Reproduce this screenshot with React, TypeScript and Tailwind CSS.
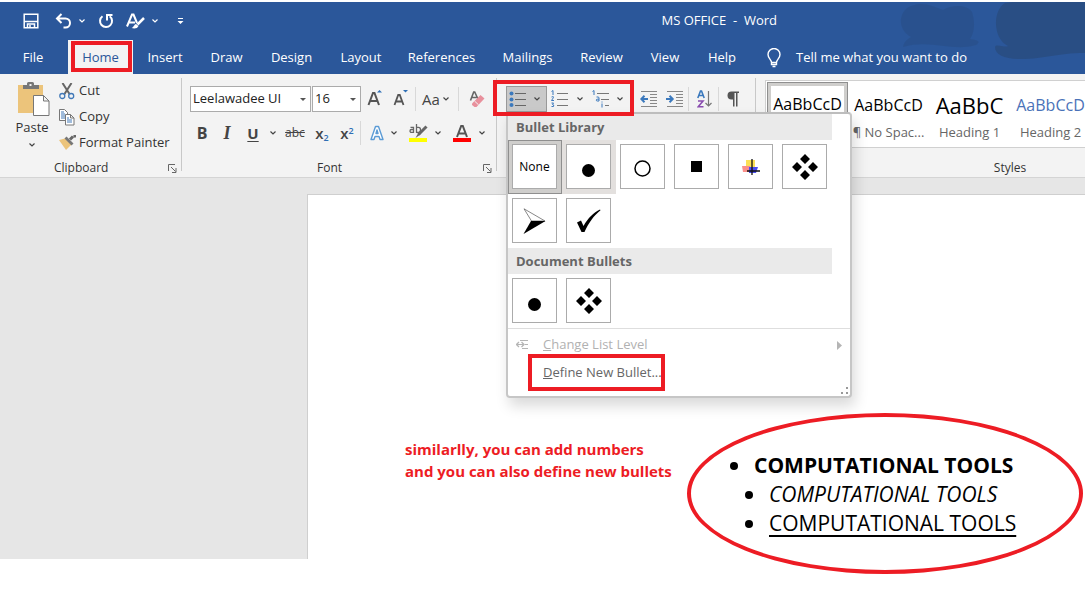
import React from "react";

type Tab = { name: string; width: string };

const TABS: Tab[] = [
  { name: "Insert", width: "w-[64px]" },
  { name: "Draw", width: "w-[59px]" },
  { name: "Design", width: "w-[71px]" },
  { name: "Layout", width: "w-[68px]" },
  { name: "References", width: "w-[93px]" },
  { name: "Mailings", width: "w-[79px]" },
  { name: "Review", width: "w-[69px]" },
  { name: "View", width: "w-[58px]" },
  { name: "Help", width: "w-[56px]" },
];

function Chevron({ className = "text-[#444]" }: { className?: string }) {
  return (
    <svg viewBox="0 0 8 6" className={`h-1.5 w-2 shrink-0 ${className}`} fill="none" stroke="currentColor" strokeWidth="1.2">
      <path d="M1.5 1.5 4 4 6.500 1.5" />
    </svg>
  );
}

function Separator() {
  return <div className="h-6 w-px shrink-0 bg-[#d8d8d8]" />;
}

function GroupDivider() {
  return <div className="mt-1 mb-1.5 w-px shrink-0 bg-[#c8c8c8]" />;
}

function Launcher({ label }: { label: string }) {
  return (
    <button aria-label={label} className="shrink-0">
      <svg viewBox="0 0 9 9" className="size-[9px]" fill="none" stroke="#666">
        <path d="M.5 7V.5H7M3 3l4.500 4.500M8 4v4.500H4" />
      </svg>
    </button>
  );
}

function QuickAccess() {
  return (
    <div className="flex items-center text-white">
      <button aria-label="Save">
        <svg viewBox="0 0 16 16" className="size-4" fill="none" stroke="currentColor" strokeWidth="1.500">
          <path d="M1.200 1.200h13.600v13.600H1.200zM1.500 8.500h13" />
          <path d="M4.500 14.500v-3.500h7v3.500M7 14v-2" />
        </svg>
      </button>
      <button aria-label="Undo" className="ml-4">
        <svg viewBox="0 0 17 16" className="h-4 w-[17px]" fill="none" stroke="currentColor" strokeWidth="2">
          <path d="M6.500 1 2 5.500 6.500 10M2 5.500h8.500a4.500 4.500 0 0 1 0 9H8.500" />
        </svg>
      </button>
      <button aria-label="Undo history" className="ml-1.5"><Chevron className="text-white" /></button>
      <button aria-label="Repeat" className="ml-3">
        <svg viewBox="0 0 16 16" className="size-4" fill="none" stroke="currentColor" strokeWidth="2">
          <path d="M4.500 3.200A6 6 0 1 0 11.700 3.300" />
          <path d="M9 7.500V2h5.500" />
        </svg>
      </button>
      <button aria-label="Text styles" className="ml-3">
        <svg viewBox="0 0 19 17" className="h-[17px] w-[19px]" fill="none" stroke="currentColor">
          <path d="M1 13.500 6 1.500h1.500L11 10M3 9.500h6" strokeWidth="2" />
          <path d="m18 5-6.500 6.500" strokeWidth="2.500" />
          <path d="M5.500 15c2-.3 2.500-3.500 4.500-4l2.500 2c-1 2.500-4 3-7 2z" fill="currentColor" stroke="none" />
        </svg>
      </button>
      <button aria-label="Text style options" className="ml-1.5"><Chevron className="text-white" /></button>
      <button aria-label="Customize quick access" className="ml-[18px]">
        <svg viewBox="0 0 7 7" className="size-[7px]" fill="currentColor">
          <path d="M1 0h5v1H1zM.5 3h6L3.500 6z" />
        </svg>
      </button>
    </div>
  );
}

function Header() {
  return (
    <header className="relative bg-[#2b579a] text-white">
      <svg viewBox="0 0 188 60" className="absolute top-0 right-0 h-[60px] w-[188px]" fill="#294c80" aria-hidden="true">
        <path opacity=".45" d="M14 4C26-1 36 4 46 8c8-5 24-6 29 2 3 9 3 20-2 27 6 1 12 2 6 6-24 7-45-6-73 2 1-6 5-8 8-10C0 28 1 9 14 4z" />
        <path opacity=".85" d="M108 1c16-3 40 0 52-1h28v51c-30 0-38 6-65 6-15 0-25-4-25-12 1-4 10 1 13-1-15-7-16-35-3-43z" />
      </svg>
      <div className="relative flex h-[38px] items-center justify-between pl-[23px]">
        <QuickAccess />
        <h1 className="mr-[308px] text-[13px] whitespace-pre">MS OFFICE  -  Word</h1>
      </div>
      <nav className="relative flex h-[34px] items-stretch text-[13px] [&>button]:pt-px">
        <button className="mr-0.5 w-[66px]">File</button>
        <button className="relative w-[65px] bg-[#f3f3f3] text-[#2b579a]">
          Home
          <span className="absolute top-px right-px bottom-0.5 left-[3px] border-4 border-[#ed1c24]" />
        </button>
        {TABS.map((t) => (
          <button key={t.name} className={t.width}>{t.name}</button>
        ))}
        <button className="ml-4 flex items-center gap-3.5">
          <svg viewBox="0 0 16 20" className="h-5 w-4" fill="none" stroke="currentColor" strokeWidth="1.400">
            <path d="M5.500 14.500c0-3-3.500-4-3.500-8a6 6 0 0 1 12 0c0 4-3.500 5-3.500 8zM5.500 14.500v2h5v-2M6.500 18.500h3" />
          </svg>
          Tell me what you want to do
        </button>
      </nav>
    </header>
  );
}

function ClipboardGroup() {
  return (
    <section className="flex w-[181px] shrink-0 flex-col">
      <div className="flex h-[85px] pt-1">
        <button className="ml-3 flex w-10 flex-col items-center pt-1">
          <svg viewBox="0 0 32 34" className="ml-1 h-[34px] w-8" fill="none">
            <path d="M0 3h25v28H0z" fill="#ecc47b" />
            <path d="M5 7V3h4V1.500Q9 0 10.500 0h4Q16 0 16 1.500V3h5v4z" fill="#777" />
            <path d="M11.500 2h2v2h-2z" fill="#f3f3f3" />
            <path d="M15.500 13.500h10l5.500 5.500v14.500H15.500zM25.500 13.500V19H31" fill="#fff" stroke="#777" />
          </svg>
          <span className="mt-0.5 text-[13px] leading-[18px]">Paste</span>
          <span className="mt-1.5"><Chevron /></span>
        </button>
        <div className="ml-[7px] flex flex-col text-[13px]">
          <button className="flex h-[26px] items-center gap-1">
            <svg viewBox="0 0 16 17" className="h-[17px] w-4" fill="none">
              <path d="M3.500 0 10.500 11M12.500 0 5.500 11" stroke="#666" strokeWidth="2" />
              <circle cx="3.300" cy="13" r="2.500" stroke="#4179b8" strokeWidth="1.300" />
              <circle cx="12.200" cy="13" r="2.500" stroke="#4179b8" strokeWidth="1.300" />
            </svg>
            Cut
          </button>
          <button className="flex h-[26px] items-center gap-1">
            <svg viewBox="0 0 16 17" className="h-[17px] w-4" fill="#fff" stroke="#777">
              <path d="M.5.500h5l3 3v8h-8z" />
              <path d="M2 3h3M2 5h4M2 7h4M2 9h4" stroke="#4179b8" />
              <path d="M6.500 5.500h5l3.500 3.500v7H6.500zM11.500 5.500V9H15" />
              <path d="M8 9h2M8 11h5M8 13h5" stroke="#4179b8" />
            </svg>
            Copy
          </button>
          <button className="flex h-[26px] items-center gap-[3px]">
            <svg viewBox="0 0 17 16" className="h-4 w-[17px] shrink-0">
              <path d="m0 5 6-1.500 6.500 6L7 15z" fill="#ecc47b" />
              <path d="m5.500 3.500 2-2 7 7-2 2z" fill="#777" />
              <path d="m11 4.500 3-3M15 0l2 2" stroke="#666" strokeWidth="3" />
            </svg>
            <span className="whitespace-nowrap">Format Painter</span>
          </button>
        </div>
      </div>
      <div className="flex h-[18px] items-center pr-1">
        <span className="ml-[54px] flex-1 text-[12px]">Clipboard</span>
        <Launcher label="Clipboard settings" />
      </div>
    </section>
  );
}

function SelectBox({ label, value, width }: { label: string; value: string; width: string }) {
  return (
    <label className={`relative flex h-[26px] items-center border border-[#ababab] bg-white ${width}`}>
      <select aria-label={label} className="h-full w-full appearance-none pl-0.5 text-[13px] text-[#222] outline-none">
        <option>{value}</option>
      </select>
      <svg viewBox="0 0 6 3" className="pointer-events-none absolute right-1 h-[3px] w-1.5" fill="#555">
        <path d="M0 0h6L3 3z" />
      </svg>
    </label>
  );
}

function FontGroup() {
  return (
    <section className="flex w-[314px] shrink-0 flex-col">
      <div className="flex h-[85px] flex-col gap-2 pt-3 pl-2 text-[#444]">
        <div className="flex h-[26px] items-center">
          <SelectBox label="Font name" value="Leelawadee UI" width="w-[121px]" />
          <SelectBox label="Font size" value="16" width="ml-px w-[49px]" />
          <button aria-label="Grow font" className="ml-1.5">
            <svg viewBox="0 0 16 18" className="h-[18px] w-4" fill="none">
              <path d="M1.500 15 6 3h1.500L12 15M3.200 11h7" stroke="#555" strokeWidth="2" />
              <path d="M10 2.500 12.500 0 15 2.500z" fill="#2f6fb5" />
            </svg>
          </button>
          <button aria-label="Shrink font" className="ml-2.5">
            <svg viewBox="0 0 16 18" className="h-[18px] w-4" fill="none">
              <path d="M1.500 15 5.200 5h1.600L10.500 15M3 11.500h6" stroke="#555" strokeWidth="1.800" />
              <path d="M10 0h5l-2.500 2.500z" fill="#2f6fb5" />
            </svg>
          </button>
          <div className="ml-1.5 flex"><Separator /></div>
          <button aria-label="Change case" className="ml-1.5 flex items-center gap-0.5 text-[15px]">Aa<Chevron /></button>
          <div className="ml-2 flex"><Separator /></div>
          <button aria-label="Clear formatting" className="ml-2.5">
            <svg viewBox="0 0 17 18" className="h-[18px] w-[17px]" fill="none">
              <path d="M1.500 10.500 4.700 2h1L9 9M2.500 7.500h5" stroke="#666" strokeWidth="1.600" />
              <path d="m3 13.500 8.500-8.500 4 3.500L7.500 17H5.500L3 15z" fill="#e8909c" />
              <path d="m5.500 11 4 3.800" stroke="#f3f3f3" />
            </svg>
          </button>
        </div>
        <div className="flex h-[26px] items-center">
          <button className="w-6 text-[16px] font-bold">B</button>
          <button className="w-[26px] font-['Liberation_Serif',serif] text-[18px] font-bold italic">I</button>
          <button className="w-[26px] text-[15px] font-bold underline underline-offset-2">U</button>
          <button aria-label="Underline style" className="flex w-3.5 justify-center"><Chevron /></button>
          <button className="w-[30px] text-[12px] line-through">abc</button>
          <button aria-label="Subscript" className="w-6 text-[15px] font-semibold">
            x<sub className="text-[9px] text-[#2f6fb5]">2</sub>
          </button>
          <button aria-label="Superscript" className="w-[26px] text-[15px] font-semibold">
            x<sup className="text-[9px] text-[#2f6fb5]">2</sup>
          </button>
          <Separator />
          <div className="ml-[9px] flex items-center gap-[11px]">
            <button aria-label="Text effects" className="flex items-center gap-1.5">
              <svg viewBox="0 0 14 16" className="h-4 w-3.5" fill="#fff" stroke="#5b9bd5" strokeWidth="1.400" strokeLinejoin="round">
                <path d="M1 14.500 5.500 1.500h3L13 14.500h-3l-1-3H5l-1 3zM6 8.500h2L7 5z" />
              </svg>
              <Chevron />
            </button>
            <button aria-label="Highlight colour" className="flex items-center gap-1.5">
              <svg viewBox="0 0 19 18" className="h-[18px] w-[19px]" fill="none" stroke="#666" strokeWidth="1.300">
                <path d="M1.500 3.300h3v5h-2q-1.500 0-1.500-1.400T2.500 5.500h2M7.500 0v8.300h2q2 0 2-2.500t-2-2.500h-2" />
                <path d="m17.500 2.500-8 8" strokeWidth="3" />
                <path d="m9.500 8.500 2 2-5 3.500z" fill="#666" stroke="none" />
                <path d="M0 14h18v4H0z" fill="#ff0" stroke="none" />
              </svg>
              <Chevron />
            </button>
            <button aria-label="Font colour" className="flex items-center gap-1.5">
              <svg viewBox="0 0 19 18" className="h-[18px] w-[19px]" fill="none">
                <path d="M4 13 8.200 2h1.600L14 13M5.500 9.500h7" stroke="#555" strokeWidth="2" />
                <path d="M0 14h18v4H0z" fill="#f00" />
              </svg>
              <Chevron />
            </button>
          </div>
        </div>
      </div>
      <div className="flex h-[18px] items-center pr-1">
        <span className="flex-1 pr-1.5 text-center text-[12px]">Font</span>
        <Launcher label="Font settings" />
      </div>
    </section>
  );
}

function Diamonds() {
  return (
    <svg viewBox="0 0 26 26" className="size-[26px]">
      <path d="m13 0 5 5-5 5-5-5zM13 16l5 5-5 5-5-5zM5 8l5 5-5 5-5-5zM21 8l5 5-5 5-5-5z" />
    </svg>
  );
}

function Dot() {
  return <span className="mt-2 size-[13px] rounded-full bg-black" />;
}

function BulletCell({ label, state = "", children }: { label: string; state?: string; children: React.ReactNode }) {
  return (
    <button aria-label={label} className={`flex size-[54px] items-start p-1 ${state}`}>
      <span className="flex size-[45px] items-center justify-center border border-[#ababab] bg-white text-[12px] text-black">
        {children}
      </span>
    </button>
  );
}

function BulletMenu() {
  return (
    <div className="absolute top-[38px] left-[9px] z-10 w-[346px] rounded border-2 border-[#c6c6c6] border-t-[#bdbdbd] bg-white text-[13px] text-[#666] shadow-[3px_8px_14px_rgba(0,0,0,0.15)]">
      <h2 className="h-[26px] w-[324px] bg-[#eaeaea] pl-2 leading-[26px] font-bold">Bullet Library</h2>
      <div className="grid w-[324px] grid-cols-6">
        <BulletCell label="None" state="bg-[#cfcecc] ring ring-[#8f8f8f] ring-inset">None</BulletCell>
        <BulletCell label="Filled circle" state="bg-[#e3e0de]"><Dot /></BulletCell>
        <BulletCell label="Hollow circle">
          <svg viewBox="0 0 17 17" className="mt-1 size-[17px]" fill="none" stroke="#000" strokeWidth="1.500">
            <circle cx="8.500" cy="8.500" r="7.500" />
          </svg>
        </BulletCell>
        <BulletCell label="Square"><span className="size-[11px] bg-black" /></BulletCell>
        <BulletCell label="Coloured cross">
          <svg viewBox="0 0 18 18" className="size-[18px]">
            <path d="M4 2h9v7H4z" fill="#fbe055" />
            <path d="M0 8h8v6H1z" fill="#fa8f8a" />
            <path d="M7 9h9l-2 6H7z" fill="#4a4ef0" />
            <path d="M10 1v16M5 13h13" stroke="#111" strokeWidth="1.300" />
          </svg>
        </BulletCell>
        <BulletCell label="Diamonds"><Diamonds /></BulletCell>
        <BulletCell label="Arrow">
          <svg viewBox="0 0 23 26" className="h-[26px] w-[23px]">
            <path d="M1 .8 22 13H8.500z" fill="#fff" stroke="#555" strokeWidth=".7" />
            <path d="M8 13h14.500L.5 26z" />
          </svg>
        </BulletCell>
        <BulletCell label="Check mark">
          <svg viewBox="0 0 24 24" className="size-6">
            <path d="M0 13.500 4 11.500 6.500 17C11 9 16.500 3.500 23 .5l.5.800C16.500 7 12 13.500 7.500 23H4.500z" />
          </svg>
        </BulletCell>
      </div>
      <h2 className="h-[26px] w-[324px] bg-[#eaeaea] pl-2 leading-[26px] font-bold">Document Bullets</h2>
      <div className="grid w-[324px] grid-cols-6">
        <BulletCell label="Document filled circle"><Dot /></BulletCell>
        <BulletCell label="Document diamonds"><Diamonds /></BulletCell>
      </div>
      <div className="border-t border-[#dedede] pt-0.5 pb-[9px]">
        <button disabled className="flex h-7 w-full items-center pr-2 pl-2 text-[#b1b1b1]">
          <svg viewBox="0 0 12 10" className="h-2.5 w-3" fill="none" stroke="#b5b5b5">
            <path d="M4 .5h8M9 4.500h3M6 8.500h6M1 4.500h6" />
            <path d="M3 2 .5 4.500 3 7M5.500 2 8 4.500 5.500 7" strokeWidth="1.300" />
          </svg>
          <span className="ml-[15px] flex-1 text-left"><u>C</u>hange List Level</span>
          <svg viewBox="0 0 5 9" className="h-[9px] w-[5px]" fill="#b5b5b5"><path d="M0 0v9l5-4.500z" /></svg>
        </button>
        <button className="relative ml-[35px] flex h-7 items-center whitespace-nowrap">
          <u>D</u>efine New Bullet...
          <span className="absolute -top-[5px] -right-[3px] -bottom-1 -left-[15px] border-4 border-[#ed1c24]" />
        </button>
      </div>
      <svg viewBox="0 0 7 7" className="absolute right-0.5 bottom-0.5 size-[7px]" fill="#999">
        <path d="M5 0h2v2H5zM5 5h2v2H5zM0 5h2v2H0z" />
      </svg>
    </div>
  );
}

function ParagraphGroup() {
  return (
    <section className="relative w-[258px] shrink-0">
      <div className="flex items-center pt-3 pl-[9px]">
        <button aria-label="Bullets" className="flex h-[26px] w-[41px] items-center gap-1.5 border border-[#999] bg-[#c9c9c9] pl-0.5">
          <svg viewBox="0 0 18 16" className="h-4 w-[18px] shrink-0" stroke="#666">
            <g fill="#3b79bd" stroke="none"><circle cx="2.500" cy="2.500" r="2" /><circle cx="2.500" cy="8.500" r="2" /><circle cx="2.500" cy="14" r="2" /></g>
            <path d="M6 2.500h11M6 8.500h11M6 14.500h11" />
          </svg>
          <Chevron />
        </button>
        <button aria-label="Numbering" className="ml-1 flex items-center gap-[7px]">
          <svg viewBox="0 0 18 18" className="h-[18px] w-[18px]" fill="none" stroke="#777">
            <path d="M6 3.500h11M6 9.500h11M6 15.500h11" />
            <path d="M.5 1.500 2 .5V5M.5 7q2.500-1 2 .5L.5 10.500H3M.5 13h2l-1 1.500q2 0 1 2H.5" stroke="#3b79bd" />
          </svg>
          <Chevron />
        </button>
        <button aria-label="Multilevel list" className="ml-2 flex items-center gap-1.5">
          <svg viewBox="0 0 18 18" className="h-[18px] w-[18px]" fill="none" stroke="#777">
            <path d="M5 3.500h12M9 9.500h8M13 15.500h4" />
            <path d="M.5 1.500 2 .5V5M4.500 7h1.500q1 0 1 1v3H5.200q-.9 0-.9-.9t.9-.9H7M10 11.500v1M10 13.500v4" stroke="#3b79bd" />
          </svg>
          <Chevron />
        </button>
        <button aria-label="Decrease indent" className="ml-4">
          <svg viewBox="0 0 18 17" className="h-[17px] w-[18px]" fill="none" stroke="#888">
            <path d="M1 .5h16M10 3.500h7M10 6.500h7M10 9.500h7M10 12.500h7M1 15.500h16" />
            <path d="M8 8H2M4.500 4.800 1.300 8l3.200 3.200" stroke="#3b79bd" strokeWidth="2" />
          </svg>
        </button>
        <button aria-label="Increase indent" className="ml-2">
          <svg viewBox="0 0 18 17" className="h-[17px] w-[18px]" fill="none" stroke="#888">
            <path d="M1 .5h16M10 3.500h7M10 6.500h7M10 9.500h7M10 12.500h7M1 15.500h16" />
            <path d="M0 8h6M3.500 4.800 6.700 8l-3.200 3.200" stroke="#3b79bd" strokeWidth="2" />
          </svg>
        </button>
        <div className="ml-1 flex"><Separator /></div>
        <button aria-label="Sort" className="ml-2">
          <svg viewBox="0 0 15 18" className="h-[18px] w-[15px]" fill="none">
            <path d="M.8 8 3.500 1h1l2.700 7M1.800 5.500h4.500" stroke="#3b79bd" strokeWidth="1.600" />
            <path d="M1 11h5L1.200 16.800h5.300" stroke="#8a4db0" strokeWidth="1.600" />
            <path d="M11.500 1v15M8.500 13l3 3 3-3" stroke="#777" strokeWidth="1.200" />
          </svg>
        </button>
        <div className="ml-1.5 flex"><Separator /></div>
        <button aria-label="Show paragraph marks" className="ml-2">
          <svg viewBox="0 0 12 16" className="h-4 w-3">
            <path d="M6 8.500H4.500A4 4 0 0 1 4.500.5H12V2h-1.500v13.500H9V2H7.500v13.500H6z" fill="#555" />
          </svg>
        </button>
      </div>
      <BulletMenu />
      <div className="pointer-events-none absolute top-1.5 -left-1 z-20 h-9 w-[141px] border-4 border-[#ed1c24]" />
    </section>
  );
}

function StylesGroup() {
  const cell = "flex h-full w-[81px] shrink-0 flex-col items-center justify-end overflow-hidden text-[13px] text-[#666] whitespace-nowrap";
  return (
    <section className="min-w-0 flex-1 overflow-hidden">
      <div className="flex w-[508px] flex-col">
        <div className="h-[85px] pt-1.5 pl-[9px]">
          <div className="flex h-[68px] border border-[#d0d0d0] bg-white p-px">
            <button className={`${cell} border border-[#8f8f8f] ring-3 ring-[#cfcecc] ring-inset`}>
              <span className="text-[16px] leading-[26px] text-black">AaBbCcD</span>
              <span className="leading-7">¶ Normal</span>
            </button>
            <button className={cell}>
              <span className="text-[16px] leading-[26px] text-black">AaBbCcD</span>
              <span className="leading-7">¶ No Spac...</span>
            </button>
            <button className={cell}>
              <span className="text-[22px] leading-[26px] text-black">AaBbC</span>
              <span className="leading-7">Heading 1</span>
            </button>
            <button className={cell}>
              <span className="text-[16px] leading-[26px] text-[#4a72b8]">AaBbCcD</span>
              <span className="leading-7">Heading 2</span>
            </button>
          </div>
        </div>
        <div className="flex h-[18px] items-center justify-center text-[12px]">Styles</div>
      </div>
    </section>
  );
}

export default function App() {
  return (
    <div className="min-h-screen bg-white pt-0.5 pr-px font-['Open_Sans','Noto_Sans',sans-serif] text-[#333]">
      <Header />
      <div className="relative z-10 flex h-[104px] border-b border-[#d4d4d4] bg-[#f3f3f3]">
        <ClipboardGroup />
        <GroupDivider />
        <FontGroup />
        <GroupDivider />
        <ParagraphGroup />
        <GroupDivider />
        <StylesGroup />
      </div>
      <main className="bg-[#e6e6e6] pt-4 pl-[307px]">
        <article className="flex items-start border-t border-l border-[#cfcfcf] bg-white pl-[97px]">
          <p className="mt-[243px] shrink-0 text-[15px] leading-[22px] font-bold whitespace-nowrap text-[#ed1c24]">
            similarlly, you can add numbers
            <br />
            and you can also define new bullets
          </p>
          <div className="mt-[218px] mr-0.5 -mb-[15px] ml-auto h-[161px] w-[396px] shrink-0 rounded-[50%] border-4 border-[#ed1c24] pt-[34px] pl-[39px] text-[21px] leading-[29px] text-black">
            <ul className="whitespace-nowrap">
              <li className="flex items-center gap-4 font-bold"><span className="size-2 rounded-full bg-black" />COMPUTATIONAL TOOLS</li>
              <li className="ml-[15px] flex items-center gap-4 italic"><span className="size-2 rounded-full bg-black" />COMPUTATIONAL TOOLS</li>
              <li className="ml-[15px] flex items-center gap-4"><span className="size-2 rounded-full bg-black" /><u className="decoration-2 underline-offset-4">COMPUTATIONAL TOOLS</u></li>
            </ul>
          </div>
        </article>
      </main>
    </div>
  );
}
